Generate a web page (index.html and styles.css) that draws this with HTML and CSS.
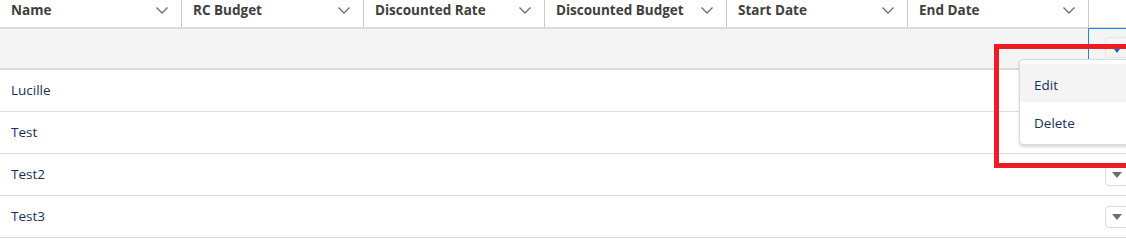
FILE: index.html
```html
<!DOCTYPE html>
<html lang="en">

<head>
    <meta charset="UTF-8">
    <meta name="viewport" content="width=device-width, initial-scale=1.0">
    <title>Budgets</title>
    <link rel="stylesheet" href="styles.css">
</head>

<body>
    <div class="grid">
        <div class="grid__head">
            <div class="cell cell--head">Name <svg class="chevron" viewBox="0 0 12 7"><polyline points="0.5,0.5 6,6 11.5,0.5"/></svg></div>
            <div class="cell cell--head">RC Budget <svg class="chevron" viewBox="0 0 12 7"><polyline points="0.5,0.5 6,6 11.5,0.5"/></svg></div>
            <div class="cell cell--head">Discounted Rate <svg class="chevron" viewBox="0 0 12 7"><polyline points="0.5,0.5 6,6 11.5,0.5"/></svg></div>
            <div class="cell cell--head">Discounted Budget <svg class="chevron" viewBox="0 0 12 7"><polyline points="0.5,0.5 6,6 11.5,0.5"/></svg></div>
            <div class="cell cell--head">Start Date <svg class="chevron" viewBox="0 0 12 7"><polyline points="0.5,0.5 6,6 11.5,0.5"/></svg></div>
            <div class="cell cell--head">End Date <svg class="chevron" viewBox="0 0 12 7"><polyline points="0.5,0.5 6,6 11.5,0.5"/></svg></div>
            <div class="cell cell--head"></div>
        </div>
        <div class="grid__filter">
            <div class="cell"></div>
            <div class="cell"></div>
            <div class="cell"></div>
            <div class="cell"></div>
            <div class="cell"></div>
            <div class="cell"></div>
            <div class="cell cell--focus"><button class="menuBtn menuBtn--active"></button></div>
        </div>
        <div class="grid__row">
            <div class="cell cell--name">Lucille</div>
            <div class="cell"></div><div class="cell"></div><div class="cell"></div><div class="cell"></div><div class="cell"></div>
            <div class="cell cell--action"><button class="menuBtn"></button></div>
        </div>
        <div class="grid__row">
            <div class="cell cell--name">Test</div>
            <div class="cell"></div><div class="cell"></div><div class="cell"></div><div class="cell"></div><div class="cell"></div>
            <div class="cell cell--action"><button class="menuBtn"></button></div>
        </div>
        <div class="grid__row">
            <div class="cell cell--name">Test2</div>
            <div class="cell"></div><div class="cell"></div><div class="cell"></div><div class="cell"></div><div class="cell"></div>
            <div class="cell cell--action"><button class="menuBtn"></button></div>
        </div>
        <div class="grid__row">
            <div class="cell cell--name">Test3</div>
            <div class="cell"></div><div class="cell"></div><div class="cell"></div><div class="cell"></div><div class="cell"></div>
            <div class="cell cell--action"><button class="menuBtn"></button></div>
        </div>

        <!-- row action menu -->
        <div class="dropdown">
            <div class="dropdown__item dropdown__item--hover">Edit</div>
            <div class="dropdown__item">Delete</div>
        </div>
        <div class="highlight"></div>
    </div>
</body>

</html>
```

FILE: styles.css
```css
* {
    margin: 0;
    padding: 0;
    box-sizing: border-box;
}

html,
body {
    overflow: hidden;
    background-color: #fff;
}

body {
    font-family: "Open Sans", "Noto Sans", sans-serif;
    font-size: 13.5px;
    color: #16325c;
}

.grid {
    position: relative;
    width: 1126px;
}

.grid__head,
.grid__filter,
.grid__row {
    display: grid;
    grid-template-columns: 181px 182px 181px 182px 181px 181px 1fr;
}

.grid__head {
    height: 29px;
    border-bottom: 2px solid #dddbda;
}

.cell--head {
    display: flex;
    justify-content: space-between;
    align-items: center;
    padding: 0 13px 7px 11px;
    font-weight: 700;
    color: #3e3e3c;
    border-left: 1px solid #c9c7c5;
}

.cell--head:first-child {
    border-left: none;
}

.chevron {
    width: 12px;
    height: 7px;
    fill: none;
    stroke: #706e6b;
    stroke-width: 1.3;
}

.grid__filter {
    height: 41px;
    background-color: #f4f4f4;
    border-bottom: 2px solid #dddbda;
}

.cell--focus {
    border-top: 1px solid #1589ee;
    border-left: 1px solid #1589ee;
    margin-top: -1px;
    padding: 8px 0 0 16px;
    overflow: hidden;
}

.grid__row {
    height: 42px;
    border-bottom: 1px solid #dddbda;
}

.cell--name {
    display: flex;
    align-items: center;
    padding-left: 11px;
    padding-bottom: 1px;
}

.cell--action {
    display: flex;
    align-items: center;
    padding-left: 17px;
    overflow: hidden;
}

.menuBtn {
    position: relative;
    flex: none;
    width: 24px;
    height: 22px;
    background-color: #fff;
    border: 1px solid #dddbda;
    border-radius: 4px;
}

.menuBtn::after {
    content: "";
    position: absolute;
    left: 6px;
    top: 7px;
    border-left: 5px solid transparent;
    border-right: 5px solid transparent;
    border-top: 6px solid #706e6b;
}

.menuBtn--active {
    height: 21px;
    background-color: #f4f4f4;
    border-color: #e5e5e5;
}

.menuBtn--active::after {
    left: 8px;
    top: 11px;
    border-left-width: 3px;
    border-right-width: 3px;
    border-top: 4px solid #0070d2;
}

.dropdown {
    position: absolute;
    left: 1019px;
    top: 59px;
    width: 130px;
    padding: 4px 0;
    background-color: #fff;
    border: 1px solid #dddbda;
    border-radius: 4px;
    box-shadow: 0 2px 3px rgba(0, 0, 0, 0.16);
}

.dropdown__item {
    height: 38px;
    line-height: 34px;
    padding: 4px 0 0 14px;
    color: #16325c;
}

.dropdown__item--hover {
    background-color: #f4f4f4;
}

.highlight {
    position: absolute;
    left: 994px;
    top: 44px;
    width: 160px;
    height: 124px;
    border: 5px solid #ed1c24;
}
```
